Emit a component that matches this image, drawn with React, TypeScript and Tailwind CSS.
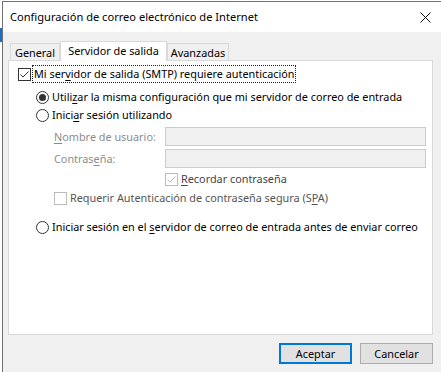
import type { ReactNode } from 'react';

const FONT = '"Noto Sans", "Open Sans", sans-serif';

function CheckBox({ checked, disabled }: { checked: boolean; disabled?: boolean }) {
  const c = disabled ? '#bcbcbc' : '#333333';
  return (
    <svg width="13" height="13" viewBox="0 0 13 13" className="shrink-0">
      <rect x="0.5" y="0.5" width="12" height="12" fill="#ffffff" stroke={c} />
      {checked && <polyline points="2.5,6.5 5,9 10.5,3.5" fill="none" stroke={c} strokeWidth="1" />}
    </svg>
  );
}

function Radio({ checked }: { checked: boolean }) {
  return (
    <svg width="13" height="13" viewBox="0 0 13 13" className="shrink-0">
      <circle cx="6.5" cy="6.5" r="6" fill="#ffffff" stroke="#333333" />
      {checked && <circle cx="6.5" cy="6.5" r="3.5" fill="#333333" />}
    </svg>
  );
}

function U({ children }: { children: ReactNode }) {
  return <span className="underline decoration-1 underline-offset-[2px]">{children}</span>;
}

function Tab({ label, active, w }: { label: string; active?: boolean; w: string }) {
  if (active) {
    return (
      <div className={`relative z-10 -mb-[1px] flex h-[20px] items-start justify-center border border-b-0 border-[#d9d9d9] bg-white pt-[1px] text-black ${w}`}>
        {label}
      </div>
    );
  }
  return (
    <div className={`flex h-[17px] items-center justify-center border border-b-0 border-[#d9d9d9] bg-[#f0f0f0] pt-[2px] text-black ${w}`}>
      {label}
    </div>
  );
}

export default function App() {
  return (
    <div
      className="flex h-[372px] w-[441px] overflow-hidden whitespace-nowrap bg-white text-[10.85px] leading-[16px] text-black"
      style={{ fontFamily: FONT }}
    >
      <div className="flex w-[2px] shrink-0 flex-col">
        <div className="h-[28px]" />
        <div className="h-[14px] bg-[#1a6fc0]" />
      </div>
      <div className="mt-[1px] flex flex-1 flex-col border-l border-t border-[#707070]">
        <div className="flex h-[30px] shrink-0 items-center justify-between bg-white pl-[7px] pr-[10px]">
          <span className="pb-[1px] text-[11.1px]">Configuración de correo electrónico de Internet</span>
          <svg width="11" height="11" viewBox="0 0 11 11">
            <path d="M0.5 0.5 L10.5 10.5 M10.5 0.5 L0.5 10.5" stroke="#111" strokeWidth="1" />
          </svg>
        </div>
        <div className="flex flex-1 flex-col bg-[#f0f0f0] pl-[5px] pr-[8px] pt-[9px]">
          <div className="ml-[2px] flex items-end">
            <Tab label="General" w="w-[50px]" />
            <Tab label="Servidor de salida" active w="w-[107px]" />
            <Tab label="Avanzadas" w="w-[62px]" />
          </div>
          <div className="flex h-[275px] flex-col border border-[#d9d9d9] bg-white">
            <div className="ml-[9px] mt-[4px] flex h-[18px] items-center">
              <CheckBox checked />
              <span className="ml-[1px] border border-dotted border-[#222] px-[1px]">
                Mi ser<U>v</U>idor de salida (SMTP) requiere autenticación
              </span>
            </div>
            <div className="ml-[27px] mt-[5px] flex h-[18px] items-center gap-[3px]">
              <Radio checked />
              <span>
                Utili<U>z</U>ar la misma configuración que mi servidor de correo de entrada
              </span>
            </div>
            <div className="ml-[27px] flex h-[18px] items-center gap-[3px]">
              <Radio checked={false} />
              <span>
                Inici<U>a</U>r sesión utilizando
              </span>
            </div>
            <div className="ml-[45px] mt-[3px] flex items-center">
              <span className="w-[111px] text-[#8c8c8c]">
                <U>N</U>ombre de usuario:
              </span>
              <div className="h-[19px] w-[261px] border border-[#c3cfdb] bg-[#f0f0f0]" />
            </div>
            <div className="ml-[45px] mt-[3px] flex items-center">
              <span className="w-[111px] text-[#8c8c8c]">
                Contras<U>e</U>ña:
              </span>
              <div className="h-[19px] w-[261px] border border-[#c3cfdb] bg-[#f0f0f0]" />
            </div>
            <div className="ml-[156px] mt-[2px] flex h-[18px] items-center gap-[3px] text-[#444]">
              <CheckBox checked disabled />
              <span>
                <U>R</U>ecordar contraseña
              </span>
            </div>
            <div className="ml-[45px] mt-[1px] flex h-[18px] items-center gap-[3px] text-[#555]">
              <CheckBox checked={false} disabled />
              <span>
                Requerir Autenticación de contraseña segura (S<U>P</U>A)
              </span>
            </div>
            <div className="ml-[27px] mt-[11px] flex h-[18px] items-center gap-[3px]">
              <Radio checked={false} />
              <span>
                Iniciar sesión en el <U>s</U>ervidor de correo de entrada antes de enviar correo
              </span>
            </div>
          </div>
          <div className="mt-[8px] flex justify-end gap-[8px]">
            <button className="flex h-[21px] w-[73px] items-center justify-center border-2 border-[#0078d7] bg-[#e1e1e1] text-black">
              Aceptar
            </button>
            <button className="flex h-[21px] w-[73px] items-center justify-center border border-[#adadad] bg-[#e1e1e1] text-black">
              Cancelar
            </button>
          </div>
        </div>
      </div>
    </div>
  );
}
